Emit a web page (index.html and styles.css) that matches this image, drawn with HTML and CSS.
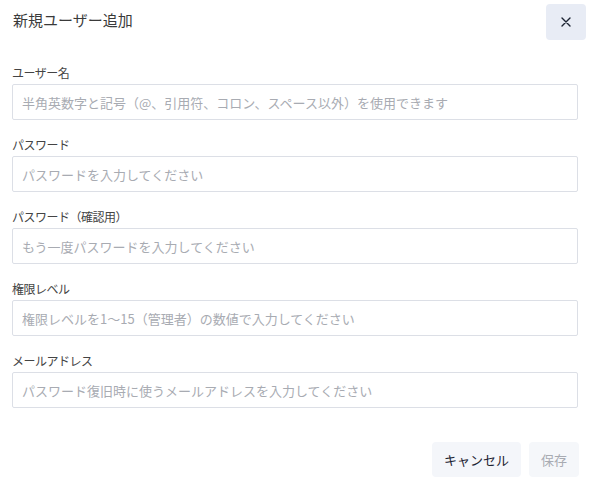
FILE: index.html
```html
<!DOCTYPE html>
<html lang="ja">
<head>
<meta charset="utf-8">
<link rel="stylesheet" href="styles.css">
</head>
<body>
<div class="dialog">
  <div class="header">
    <div class="title">新規ユーザー追加</div>
    <button class="close" aria-label="閉じる">
      <svg width="10" height="10" viewBox="0 0 10 10"><path d="M1 1L9 9M9 1L1 9" stroke="#1d2433" stroke-width="1.4" stroke-linecap="round"/></svg>
    </button>
  </div>
  <form class="form">
    <div class="field">
      <label class="label">ユーザー名</label>
      <input class="input" placeholder="半角英数字と記号（@、引用符、コロン、スペース以外）を使用できます">
    </div>
    <div class="field">
      <label class="label">パスワード</label>
      <input class="input" placeholder="パスワードを入力してください">
    </div>
    <div class="field">
      <label class="label">パスワード（確認用）</label>
      <input class="input" placeholder="もう一度パスワードを入力してください">
    </div>
    <div class="field">
      <label class="label">権限レベル</label>
      <input class="input" placeholder="権限レベルを1～15（管理者）の数値で入力してください">
    </div>
    <div class="field">
      <label class="label">メールアドレス</label>
      <input class="input" placeholder="パスワード復旧時に使うメールアドレスを入力してください">
    </div>
  </form>
  <div class="footer">
    <button class="btn cancel">キャンセル</button>
    <button class="btn save" disabled>保存</button>
  </div>
</div>
</body>
</html>
```

FILE: styles.css
```css
* { box-sizing: border-box; }
body {
  margin: 0;
  background: #fff;
  font-family: "Noto Sans CJK JP", "Noto Sans", sans-serif;
  color: #303133;
}
.dialog {
  padding: 4px 6px 0 12px;
}
.header {
  display: flex;
  justify-content: space-between;
  align-items: center;
  height: 36px;
}
.title {
  font-size: 15px;
  line-height: 20px;
  color: #3a3a3a;
  margin-top: -4px;
  padding-left: 1px;
}
.close {
  width: 40px;
  height: 36px;
  border: none;
  border-radius: 4px;
  background: #e8ecf5;
  display: flex;
  align-items: center;
  justify-content: center;
  padding: 0;
}
.form {
  margin-top: 25px;
  margin-right: 8px;
  display: flex;
  flex-direction: column;
  gap: 17px;
}
.field {
  display: flex;
  flex-direction: column;
  gap: 3px;
}
.label {
  font-size: 12px;
  line-height: 16px;
  letter-spacing: -0.5px;
  color: #444;
}
.input {
  height: 36px;
  width: 100%;
  border: 1px solid #dcdfe6;
  border-radius: 2px;
  padding: 0 9px;
  font-family: inherit;
  font-size: 13px;
  color: #303133;
  outline: none;
}
.input::placeholder {
  color: #a8abb2;
}
.footer {
  display: flex;
  justify-content: flex-end;
  gap: 8px;
  margin-top: 34px;
  margin-right: 7px;
}
.btn {
  height: 35px;
  border: none;
  border-radius: 4px;
  background: #f4f6fa;
  font-family: inherit;
  font-size: 13px;
  padding: 0;
}
.cancel {
  width: 89px;
  color: #1d2433;
}
.save {
  width: 50px;
  color: #a8abb2;
  background: #f5f7fa;
}
```
